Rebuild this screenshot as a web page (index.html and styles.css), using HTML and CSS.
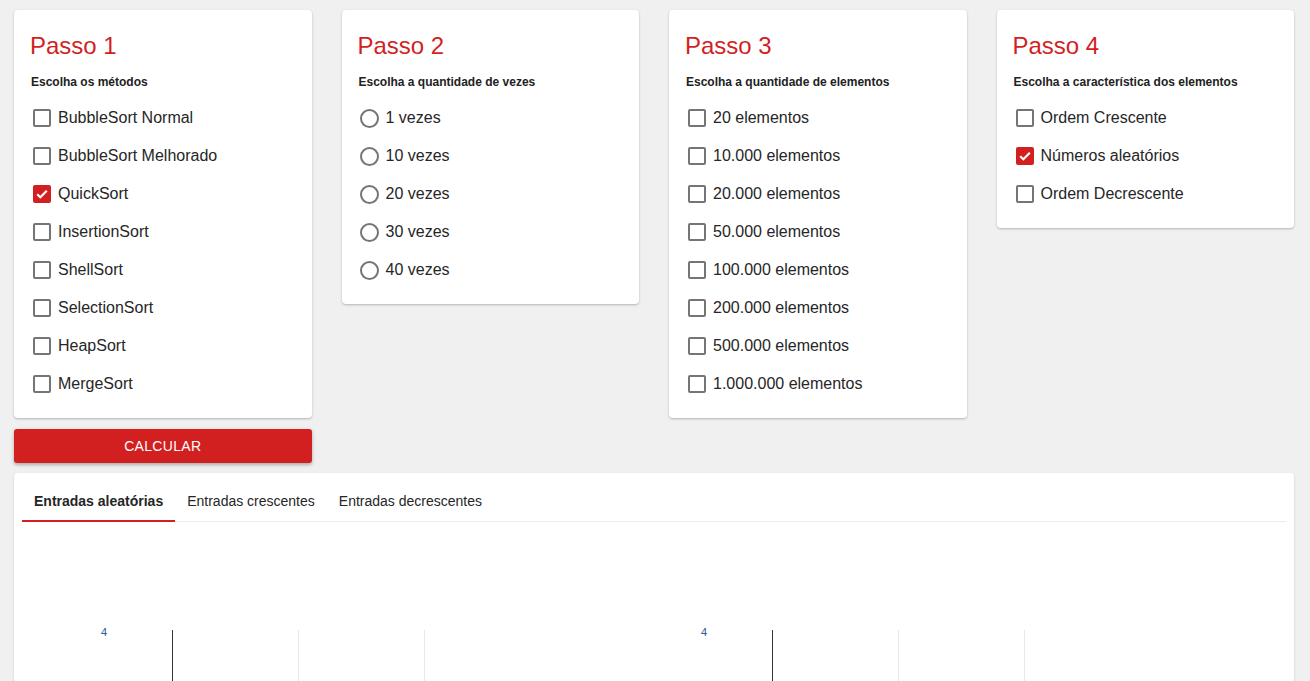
FILE: index.html
```html
<!DOCTYPE html>
<html lang="pt">
<head>
<meta charset="utf-8">
<title>Ordenação</title>
<link rel="stylesheet" href="styles.css">
</head>
<body>
<main class="page">
  <section class="steps">
    <div class="col">
      <div class="card">
        <h2 class="card-title">Passo 1</h2>
        <p class="card-sub">Escolha os métodos</p>
        <ul class="opts">
          <li class="opt"><span class="box"></span>BubbleSort Normal</li>
          <li class="opt"><span class="box"></span>BubbleSort Melhorado</li>
          <li class="opt"><span class="box checked"><svg viewBox="0 0 18 18" width="18" height="18"><path d="M4.2 9.2l3.1 3.1 6.5-6.6" fill="none" stroke="#fff" stroke-width="2.2"/></svg></span>QuickSort</li>
          <li class="opt"><span class="box"></span>InsertionSort</li>
          <li class="opt"><span class="box"></span>ShellSort</li>
          <li class="opt"><span class="box"></span>SelectionSort</li>
          <li class="opt"><span class="box"></span>HeapSort</li>
          <li class="opt"><span class="box"></span>MergeSort</li>
        </ul>
      </div>
      <button class="btn">Calcular</button>
    </div>
    <div class="col">
      <div class="card">
        <h2 class="card-title">Passo 2</h2>
        <p class="card-sub">Escolha a quantidade de vezes</p>
        <ul class="opts">
          <li class="opt"><span class="radio"></span>1 vezes</li>
          <li class="opt"><span class="radio"></span>10 vezes</li>
          <li class="opt"><span class="radio"></span>20 vezes</li>
          <li class="opt"><span class="radio"></span>30 vezes</li>
          <li class="opt"><span class="radio"></span>40 vezes</li>
        </ul>
      </div>
    </div>
    <div class="col">
      <div class="card">
        <h2 class="card-title">Passo 3</h2>
        <p class="card-sub">Escolha a quantidade de elementos</p>
        <ul class="opts">
          <li class="opt"><span class="box"></span>20 elementos</li>
          <li class="opt"><span class="box"></span>10.000 elementos</li>
          <li class="opt"><span class="box"></span>20.000 elementos</li>
          <li class="opt"><span class="box"></span>50.000 elementos</li>
          <li class="opt"><span class="box"></span>100.000 elementos</li>
          <li class="opt"><span class="box"></span>200.000 elementos</li>
          <li class="opt"><span class="box"></span>500.000 elementos</li>
          <li class="opt"><span class="box"></span>1.000.000 elementos</li>
        </ul>
      </div>
    </div>
    <div class="col">
      <div class="card">
        <h2 class="card-title">Passo 4</h2>
        <p class="card-sub">Escolha a característica dos elementos</p>
        <ul class="opts">
          <li class="opt"><span class="box"></span>Ordem Crescente</li>
          <li class="opt"><span class="box checked"><svg viewBox="0 0 18 18" width="18" height="18"><path d="M4.2 9.2l3.1 3.1 6.5-6.6" fill="none" stroke="#fff" stroke-width="2.2"/></svg></span>Números aleatórios</li>
          <li class="opt"><span class="box"></span>Ordem Decrescente</li>
        </ul>
      </div>
    </div>
  </section>

  <section class="panel">
    <nav class="tabs">
      <span class="tab active">Entradas aleatórias</span>
      <span class="tab">Entradas crescentes</span>
      <span class="tab">Entradas decrescentes</span>
    </nav>
    <div class="charts">
      <svg class="chart" viewBox="0 0 600 160" width="600" height="160">
        <text x="82" y="114" class="tick">4</text>
        <line x1="150.5" y1="108" x2="150.5" y2="160" class="axis"/>
        <line x1="276.5" y1="108" x2="276.5" y2="160" class="grid"/>
        <line x1="402.5" y1="108" x2="402.5" y2="160" class="grid"/>
      </svg>
      <svg class="chart" viewBox="0 0 600 160" width="600" height="160">
        <text x="82" y="114" class="tick">4</text>
        <line x1="150.5" y1="108" x2="150.5" y2="160" class="axis"/>
        <line x1="276.5" y1="108" x2="276.5" y2="160" class="grid"/>
        <line x1="402.5" y1="108" x2="402.5" y2="160" class="grid"/>
      </svg>
    </div>
  </section>
</main>
</body>
</html>
```
FILE: styles.css
```css
html, body {
  margin: 0;
  padding: 0;
  background: #f0f0f0;
  overflow: hidden;
}

body {
  font-family: "Liberation Sans", Arial, sans-serif;
  color: #222;
}

.page {
  padding: 10px 16px 0 14px;
}

.steps {
  display: grid;
  grid-template-columns: repeat(4, 1fr);
  column-gap: 30px;
  align-items: start;
}

.col {
  display: flex;
  flex-direction: column;
}

.card {
  background: #fff;
  border-radius: 4px;
  box-shadow: 0 1px 3px rgba(0, 0, 0, 0.12), 0 1px 2px rgba(0, 0, 0, 0.14);
  padding: 21px 17px 15px 16px;
}

.card-title {
  margin: 0;
  font-size: 24px;
  line-height: 29px;
  font-weight: 400;
  color: #d21f1f;
}

.card-sub {
  margin: 14px 0 0 1px;
  font-size: 12px;
  line-height: 16px;
  font-weight: 700;
  color: #222;
}

.opts {
  list-style: none;
  margin: 9px 0 0;
  padding: 0;
}

.opt {
  display: flex;
  align-items: center;
  gap: 7px;
  height: 38px;
  font-size: 16px;
  color: #262626;
}

.box {
  box-sizing: border-box;
  width: 18px;
  height: 18px;
  margin-left: 3px;
  border: 2px solid #757575;
  border-radius: 2px;
  flex: none;
  position: relative;
}

.box.checked {
  background: #d21f1f;
  border-color: #d21f1f;
}

.box.checked svg {
  position: absolute;
  left: -2px;
  top: -2px;
}

.radio {
  box-sizing: border-box;
  width: 19px;
  height: 19px;
  margin-left: 2px;
  border: 2px solid #757575;
  border-radius: 50%;
  flex: none;
}

.btn {
  margin-top: 11px;
  height: 34px;
  border: none;
  border-radius: 3px;
  background: #d21f1f;
  color: #fff;
  font-family: "Liberation Sans", Arial, sans-serif;
  font-size: 14px;
  letter-spacing: 0.3px;
  text-transform: uppercase;
  box-shadow: 0 2px 3px rgba(0, 0, 0, 0.2), 0 1px 5px rgba(0, 0, 0, 0.12);
  cursor: pointer;
}

.panel {
  margin-top: 10px;
  background: #fff;
  border-radius: 4px;
  box-shadow: 0 1px 3px rgba(0, 0, 0, 0.12);
  padding: 8px 8px 0;
}

.tabs {
  display: flex;
  border-bottom: 1px solid #ececec;
}

.tab {
  box-sizing: border-box;
  height: 41px;
  display: flex;
  align-items: center;
  padding: 0 12px;
  font-size: 14px;
  color: #262626;
  border-bottom: 2px solid transparent;
  margin-bottom: -1px;
}

.tab.active {
  font-weight: 700;
  border-bottom-color: #d21f1f;
}

.charts {
  display: flex;
}

.chart {
  display: block;
}

.tick {
  font-family: "Liberation Sans", Arial, sans-serif;
  font-size: 11px;
  fill: #2c5a8c;
  text-anchor: middle;
}

.axis {
  stroke: #333;
  stroke-width: 1;
}

.grid {
  stroke: #e8e8e8;
  stroke-width: 1;
}
```
